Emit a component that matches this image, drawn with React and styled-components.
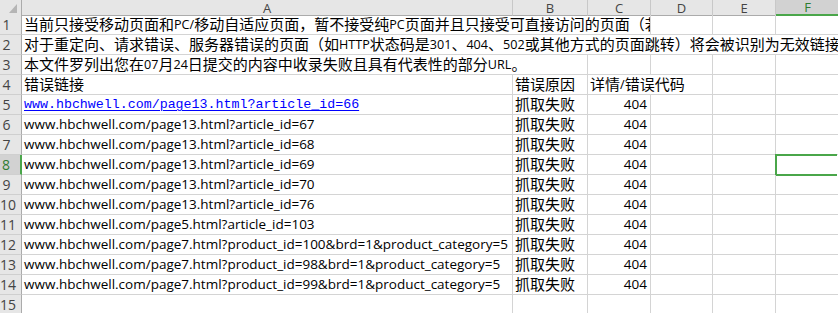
import React from "react";
import styled, { createGlobalStyle } from "styled-components";

const GlobalStyle = createGlobalStyle`
  html, body {
    margin: 0;
    padding: 0;
    background: #fff;
    overflow: hidden;
  }
`;

const COLS = "22px 491px 75px 63px 62px 63px 64px";
const GREEN = "#4aa64a";

const Sheet = styled.div`
  width: 838px;
  height: 313px;
  overflow: hidden;
  background: #fff;
  font-family: "Open Sans", "Noto Sans CJK SC", sans-serif;
  color: #000;
`;

const Row = styled.div`
  display: grid;
  grid-template-columns: ${COLS};
  height: ${p => (p.$head ? 15 : 20)}px;
`;

const Corner = styled.div`
  box-sizing: border-box;
  background: #e6e6e6;
  border-right: 1px solid #ababab;
  border-bottom: 1px solid #ababab;
  display: flex;
  align-items: flex-end;
  justify-content: flex-end;
  padding: 0 4px 2px 0;
`;

const ColHead = styled.div`
  box-sizing: border-box;
  background: ${p => (p.$active ? "#d2d2d2" : "#e6e6e6")};
  border-right: 1px solid #c8c8c8;
  border-bottom: ${p => (p.$active ? `2px solid ${GREEN}` : "1px solid #ababab")};
  color: ${p => (p.$active ? "#2f7d32" : "#444")};
  font: 13px/14px "Open Sans", sans-serif;
  display: flex;
  align-items: center;
  justify-content: center;
`;

const RowHead = styled.div`
  box-sizing: border-box;
  background: ${p => (p.$active ? "#d2d2d2" : "#e6e6e6")};
  border-right: ${p => (p.$active ? `2px solid ${GREEN}` : "1px solid #ababab")};
  border-bottom: 1px solid #cfcfcf;
  color: ${p => (p.$active ? "#2f7d32" : "#444")};
  font: 14px/19px "Open Sans", sans-serif;
  padding-right: 8px;
  text-align: center;
`;

const Cell = styled.div`
  position: relative;
  box-sizing: border-box;
  grid-column: span ${p => p.$span || 1};
  border-right: 1px solid #d4d4d4;
  border-bottom: 1px solid #d4d4d4;
  padding: 0 3px 0 2px;
  display: flex;
  align-items: flex-end;
  justify-content: ${p => (p.$right ? "flex-end" : "flex-start")};
  white-space: nowrap;
  overflow: ${p => (p.$selected ? "visible" : "hidden")};
  font-size: 15px;
  line-height: 19px;
`;

const Latin = styled.span`
  font-family: "Open Sans", sans-serif;
  font-size: ${p => (p.$data ? 13.5 : 12.6)}px;
`;

const Link = styled.span`
  font-family: "Liberation Mono", monospace;
  font-size: 13.3px;
  color: #0000ff;
  text-decoration: underline;
  text-underline-offset: 2px;
`;

const Selection = styled.div`
  position: absolute;
  left: -1px;
  top: -1px;
  width: 62px;
  height: 22px;
  box-sizing: border-box;
  border: 2px solid ${GREEN};
  border-right: none;
  pointer-events: none;
`;

const Handle = styled.div`
  position: absolute;
  left: 60px;
  top: 16px;
  width: 6px;
  height: 6px;
  box-sizing: border-box;
  background: ${GREEN};
  border-left: 1px solid #fff;
  border-top: 1px solid #fff;
`;

const Mixed = ({ text }) =>
  text
    .split(/([A-Za-z0-9/._?=&]+)/)
    .map((part, i) => (i % 2 ? <Latin key={i}>{part}</Latin> : part));

const LETTERS = ["A", "B", "C", "D", "E", "F"];

const URLS = [
  "www.hbchwell.com/page13.html?article_id=67",
  "www.hbchwell.com/page13.html?article_id=68",
  "www.hbchwell.com/page13.html?article_id=69",
  "www.hbchwell.com/page13.html?article_id=70",
  "www.hbchwell.com/page13.html?article_id=76",
  "www.hbchwell.com/page5.html?article_id=103",
  "www.hbchwell.com/page7.html?product_id=100&brd=1&product_category=5",
  "www.hbchwell.com/page7.html?product_id=98&brd=1&product_category=5",
  "www.hbchwell.com/page7.html?product_id=99&brd=1&product_category=5",
];

const Empty = ({ n }) =>
  Array.from({ length: n }, (_, i) => <Cell key={"e" + i} />);

export default function App() {
  return (
    <Sheet>
      <GlobalStyle />
      <Row $head>
        <Corner>
          <svg width="8" height="9" viewBox="0 0 8 9">
            <path d="M8 0 L8 9 L0 9 Z" fill="#b5b5b5" />
          </svg>
        </Corner>
        {LETTERS.map(l => (
          <ColHead key={l} $active={l === "F"}>
            {l}
          </ColHead>
        ))}
      </Row>

      <Row>
        <RowHead>1</RowHead>
        <Cell $span={3}>
          <Mixed text="当前只接受移动页面和PC/移动自适应页面，暂不接受纯PC页面并且只接受可直接访问的页面（若有跳转请提交最终页面）" />
        </Cell>
        <Empty n={3} />
      </Row>
      <Row>
        <RowHead>2</RowHead>
        <Cell $span={6}>
          <Mixed text="对于重定向、请求错误、服务器错误的页面（如HTTP状态码是301、404、502或其他方式的页面跳转）将会被识别为无效链接" />
        </Cell>
      </Row>
      <Row>
        <RowHead>3</RowHead>
        <Cell $span={2}>
          <Mixed text="本文件罗列出您在07月24日提交的内容中收录失败且具有代表性的部分URL。" />
        </Cell>
        <Empty n={4} />
      </Row>
      <Row>
        <RowHead>4</RowHead>
        <Cell>错误链接</Cell>
        <Cell>错误原因</Cell>
        <Cell $span={2}>
          <Mixed text="详情/错误代码" />
        </Cell>
        <Empty n={2} />
      </Row>
      <Row>
        <RowHead>5</RowHead>
        <Cell>
          <Link>www.hbchwell.com/page13.html?article_id=66</Link>
        </Cell>
        <Cell>抓取失败</Cell>
        <Cell $right>
          <Latin $data>404</Latin>
        </Cell>
        <Empty n={3} />
      </Row>
      {URLS.map((url, i) => {
        const n = i + 6;
        return (
          <Row key={n}>
            <RowHead $active={n === 8}>{n}</RowHead>
            <Cell>
              <Latin $data>{url}</Latin>
            </Cell>
            <Cell>抓取失败</Cell>
            <Cell $right>
              <Latin $data>404</Latin>
            </Cell>
            <Cell />
            <Cell />
            <Cell $selected={n === 8}>
              {n === 8 && (
                <Selection>
                  <Handle />
                </Selection>
              )}
            </Cell>
          </Row>
        );
      })}
      <Row>
        <RowHead>15</RowHead>
        <Empty n={6} />
      </Row>
    </Sheet>
  );
}
